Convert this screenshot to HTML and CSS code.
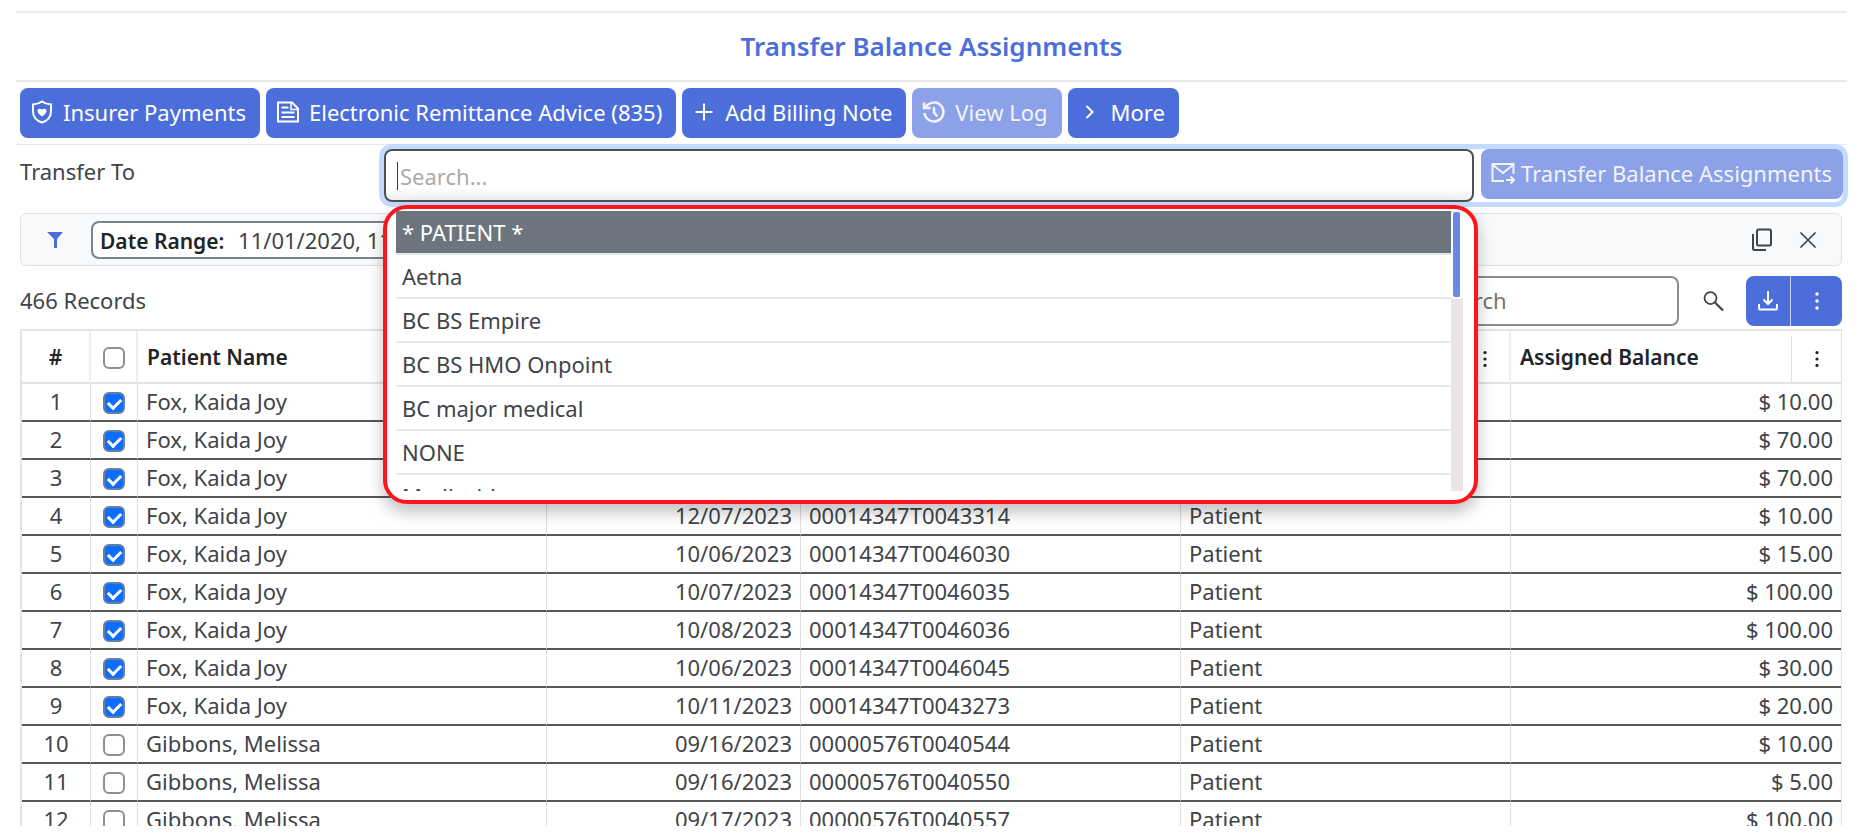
FILE: index.html
```html
<!DOCTYPE html>
<html lang="en">
<head>
    <meta charset="UTF-8">
    <meta name="viewport" content="width=device-width, initial-scale=1.0">
    <title>Transfer Balance Assignments</title>
    <link rel="stylesheet" href="styles.css">
</head>
<body>
    <main class="page">
        <h1>Transfer Balance Assignments</h1>

        <div class="toolbar">
            <button type="button" class="btn">
                <svg class="icon" viewBox="0 0 24 24" fill="none" stroke="currentColor" stroke-width="2"><path d="M12 1.500c2.500 1.800 5.500 2.800 9 3v7c0 5.500-4 9.500-9 11-5-1.500-9-5.500-9-11v-7c3.500-.2 6.500-1.200 9-3z"/><path d="M12 16.500c-3-2.300-4.500-3.900-4.500-5.600C7.500 8.500 10.500 8 12 9.800 13.500 8 16.500 8.500 16.500 10.900c0 1.700-1.500 3.300-4.500 5.600z" fill="currentColor" stroke="none"/></svg>
                Insurer Payments
            </button>
            <button type="button" class="btn">
                <svg class="icon" viewBox="0 0 24 24" fill="none" stroke="currentColor" stroke-width="2"><path d="M2 2.500h14l6 6v13H2z"/><path d="M15 3v6.500h7" stroke-width="1.500"/><path d="M5.500 7.500h7M5.500 12.500h13M5.500 17h13"/></svg>
                Electronic Remittance Advice (835)
            </button>
            <button type="button" class="btn">
                <svg class="icon" viewBox="0 0 24 24" fill="none" stroke="currentColor" stroke-width="2"><path d="M12 3.500v17M3.500 12h17"/></svg>
                Add Billing Note
            </button>
            <button type="button" class="btn" disabled>
                <svg class="icon" viewBox="0 0 24 24" fill="none" stroke="currentColor" stroke-width="2.500"><path d="M2.500 13a9.500 9.500 0 1 0 3-8L3 7.500"/><path d="M2 2.500V8h6.500M12 7v5.500l3.500 4"/></svg>
                View Log
            </button>
            <button type="button" class="btn">
                <svg class="icon" viewBox="0 0 24 24" fill="none" stroke="currentColor" stroke-width="2"><path d="M8.500 6l6 6-6 6"/></svg>
                More
            </button>
        </div>

        <div class="transfer">
            <label for="transfer-to">Transfer To</label>
            <div class="transfer-group">
                <div class="combo">
                    <input type="text" id="transfer-to" placeholder="Search..." role="combobox" aria-expanded="true" aria-controls="insurers" autocomplete="off">
                    <div class="menu">
                        <ul id="insurers" role="listbox" aria-label="Transfer To">
                            <li role="option" class="active" aria-selected="true">* PATIENT *</li>
                            <li role="option">Aetna</li>
                            <li role="option">BC BS Empire</li>
                            <li role="option">BC BS HMO Onpoint</li>
                            <li role="option">BC major medical</li>
                            <li role="option">NONE</li>
                            <li role="option">Medicaid</li>
                        </ul>
                        <div class="scrollbar"><div class="thumb"></div></div>
                    </div>
                </div>
                <button type="button" class="btn" disabled>
                    <svg class="icon" viewBox="0 0 24 24" fill="none" stroke="currentColor" stroke-width="2"><path d="M13 20H1.500V3h21v10"/><path d="M2 4l10 8 10-8"/><path d="M15 19h8M19.500 15.500L23 19l-3.500 3.500"/></svg>
                    Transfer Balance Assignments
                </button>
            </div>
        </div>

        <div class="filters">
            <svg class="funnel" viewBox="0 0 16 16" fill="currentColor"><path d="M0 0h16l-6 7v9H7V7z"/></svg>
            <div class="chip"><b>Date Range:</b> 11/01/2020, 11/30/2024</div>
            <button type="button" class="icon-btn copy" aria-label="Copy filters">
                <svg class="icon" viewBox="0 0 24 24" fill="none" stroke="currentColor" stroke-width="2"><rect x="7" y="1.500" width="14" height="16" rx="1.500"/><path d="M3 6v14.500c0 1 .5 1.500 1.500 1.500H16"/></svg>
            </button>
            <button type="button" class="icon-btn" aria-label="Clear filters">
                <svg class="icon" viewBox="0 0 24 24" fill="none" stroke="currentColor" stroke-width="1.750"><path d="M4.500 4.500l15 15M19.500 4.500l-15 15"/></svg>
            </button>
        </div>

        <div class="records">
            <span class="count">466 Records</span>
            <input type="search" placeholder="Search" aria-label="Search records">
            <button type="button" class="icon-btn" aria-label="Search">
                <svg class="icon" viewBox="0 0 24 24" fill="none" stroke="currentColor" stroke-width="1.750"><circle cx="8.500" cy="9" r="6"/><path d="M13 13.500l8 8" stroke-width="2.250"/></svg>
            </button>
            <div class="split">
                <button type="button" aria-label="Download">
                    <svg class="icon" viewBox="0 0 24 24" fill="none" stroke="currentColor" stroke-width="2"><path d="M12 2v13M7.500 10.500L12 15l4.500-4.500M3 15v4.500c0 .8.500 1 1 1h16c.5 0 1-.2 1-1V15"/></svg>
                </button>
                <button type="button" aria-label="More options">
                    <svg class="icon" viewBox="0 0 24 24" fill="currentColor"><circle cx="12" cy="5" r="1.750"/><circle cx="12" cy="12" r="1.750"/><circle cx="12" cy="19" r="1.750"/></svg>
                </button>
            </div>
        </div>

        <div class="table-wrap">
            <table>
                <colgroup>
                    <col class="c-num"><col class="c-check"><col class="c-name"><col class="c-date"><col class="c-claim"><col class="c-assigned"><col class="c-balance">
                </colgroup>
                <thead>
                    <tr>
                        <th class="num">#</th>
                        <th class="check"><input type="checkbox" aria-label="Select all"></th>
                        <th>Patient Name</th>
                        <th></th>
                        <th></th>
                        <th><div class="head"><button type="button" class="col-menu" aria-label="Column menu"><svg class="icon" viewBox="0 0 24 24" fill="currentColor"><circle cx="12" cy="5" r="1.750"/><circle cx="12" cy="12" r="1.750"/><circle cx="12" cy="19" r="1.750"/></svg></button></div></th>
                        <th><div class="head"><span>Assigned Balance</span><button type="button" class="col-menu" aria-label="Assigned Balance menu"><svg class="icon" viewBox="0 0 24 24" fill="currentColor"><circle cx="12" cy="5" r="1.750"/><circle cx="12" cy="12" r="1.750"/><circle cx="12" cy="19" r="1.750"/></svg></button></div></th>
                    </tr>
                </thead>
                <tbody id="rows"></tbody>
            </table>
        </div>
    </main>

    <script src="script.js"></script>
</body>
</html>
```
FILE: styles.css
```css
* {
    box-sizing: border-box;
}

body {
    margin: 0;
    font-family: "Segoe UI", "Noto Sans", sans-serif;
    font-size: 22px;
    line-height: 28px;
    color: #3f444a;
    background: #fff;
}

button, input {
    font: inherit;
    color: inherit;
}

button {
    padding: 0;
    border: none;
    background: none;
    cursor: pointer;
}

.page {
    height: 100vh;
    padding: 11px 14px 11px 16px;
    display: flex;
    flex-direction: column;
}

h1 {
    margin: 0;
    padding: 16px 0 17px;
    border-top: 2px solid #e6ecfa;
    border-bottom: 2px solid #e5e9ee;
    font-size: 26px;
    line-height: 34px;
    font-weight: 600;
    text-align: center;
    color: #4c6edb;
}

.toolbar {
    display: flex;
    gap: 6px;
    padding: 6px 4px;
    border-bottom: 1px solid #e5e9ee;
}

.btn {
    display: flex;
    align-items: center;
    gap: 9px;
    height: 50px;
    padding: 0 14px 2px 10px;
    border-radius: 8px;
    background: #4c6edb;
    color: #fff;
    white-space: nowrap;
}

.btn:disabled {
    background: #8ca1e7;
    color: #f1f4fd;
    cursor: default;
}

.icon {
    width: 24px;
    height: 24px;
    flex: none;
}

/* transfer row */

.transfer {
    display: grid;
    grid-template-columns: 364px 1fr;
    padding: 4px 4px 0;
}

.transfer label {
    padding-top: 8px;
}

.transfer-group {
    display: flex;
    gap: 7px;
    height: 53px;
    border-radius: 8px;
    box-shadow: 0 0 0 5px #c2dbfe;
}

.transfer-group .btn {
    gap: 6px;
    padding: 0 11px 2px 10px;
}

.combo {
    position: relative;
    flex: 1;
}

.combo input {
    width: 100%;
    height: 53px;
    padding: 0 14px;
    border: 2px solid #4a5056;
    border-radius: 8px;
    outline: none;
    background: linear-gradient(#fff 75%, #eee);
}

.combo input::placeholder {
    color: #aaa;
}

/* caret */
.combo::before {
    content: "";
    position: absolute;
    top: 13px;
    left: 13px;
    width: 1px;
    height: 28px;
    background: #33383d;
}

.menu {
    position: absolute;
    z-index: 10;
    top: 56px;
    left: -1px;
    right: -4px;
    display: flex;
    height: 299px;
    padding: 2px 11px 9px 9px;
    border: 4px solid #ff141c;
    border-radius: 24px;
    background: #fff;
    box-shadow: 0 8px 16px rgba(0, 0, 0, 0.25);
}

.menu ul {
    flex: 1;
    margin: 0;
    padding: 0;
    overflow: hidden;
    list-style: none;
}

.menu li {
    height: 44px;
    padding: 7px 6px;
    border-bottom: 2px solid #e5e9ee;
}

.menu li.active {
    background: #6c757d;
    color: #fff;
}

.scrollbar {
    width: 12px;
    background: #ebe4e5;
}

.thumb {
    height: 88px;
    border: 2px solid #fff;
    border-width: 1px 3px 2px 2px;
    border-radius: 4px;
    background: #6b88e9;
}

/* active filters */

.filters {
    display: flex;
    align-items: center;
    height: 53px;
    margin: 11px 5px 0 4px;
    padding: 0 21px 0 26px;
    border: 1px solid #dee2e6;
    border-radius: 6px;
    background: #f8f9fa;
}

.funnel {
    width: 16px;
    height: 16px;
    color: #4c6edb;
}

.chip {
    height: 38px;
    margin-left: 28px;
    padding: 3px 7px;
    border: 2px solid #7b838a;
    border-radius: 8px;
    background: #fff;
    white-space: pre;
}

.chip b {
    margin-right: 8px;
    font-size: 21px;
    font-weight: 600;
    color: #212529;
}

.icon-btn {
    display: flex;
}

.copy {
    margin-left: auto;
    margin-right: 22px;
}

/* record count and search */

.records {
    display: flex;
    align-items: center;
    margin: 10px 5px 3px 4px;
}

.count {
    margin-right: auto;
    padding-bottom: 2px;
}

.records input {
    width: 248px;
    height: 50px;
    margin-right: 23px;
    padding: 0 8px 2px 4px;
    border: 2px solid #8c8c8c;
    border-radius: 8px;
    outline: none;
}

.records input::placeholder {
    color: #757575;
}

.split {
    display: flex;
    height: 50px;
    margin-left: 20px;
    border-radius: 8px;
    background: #4c6edb;
    color: #fff;
}

.split button {
    display: grid;
    place-items: center;
    width: 44px;
}

.split button + button {
    width: 52px;
    border-left: 1px solid #c9d3f4;
}

/* table */

.table-wrap {
    flex: 1;
    min-height: 0;
    margin: 0 5px 0 4px;
    overflow: hidden;
}

table {
    width: 100%;
    table-layout: fixed;
    border-collapse: separate;
    border-spacing: 0;
    border: 2px solid #e0e3e8;
    border-right-width: 1px;
}

.c-num { width: 69px; }
.c-check { width: 47px; }
.c-name { width: 409px; }
.c-date { width: 254px; }
.c-claim { width: 380px; }
.c-assigned { width: 330px; }

th {
    height: 53px;
    padding: 0 9px;
    border-right: 2px solid #eceef1;
    border-bottom: 2px solid #e0e3e8;
    font-size: 21px;
    font-weight: 600;
    text-align: left;
    color: #212529;
}

th:nth-last-child(-n+2) {
    padding-right: 0;
}

th:last-child {
    border-right: none;
}

td {
    height: 38px;
    padding: 0 8px 2px;
    border-right: 1px solid #dcdee0;
    border-bottom: 2px solid #54585c;
    white-space: nowrap;
}

td:last-child {
    border-right: none;
}

.head {
    display: flex;
    align-items: center;
}

.col-menu {
    display: grid;
    place-items: center;
    height: 46px;
    width: 50px;
    margin-top: 5px;
    margin-left: auto;
    border-left: 1px solid #dcdfe5;
}

.col-menu .icon {
    width: 22px;
    height: 22px;
}

.num {
    text-align: center;
}

.date, .money {
    text-align: right;
}

.check {
    padding: 0;
    text-align: center;
}

.check input {
    appearance: none;
    display: block;
    width: 22px;
    height: 22px;
    margin: 2px auto 0;
    border: 2px solid #8f8f8f;
    border-radius: 6px;
    background: #fff;
}

.check input:checked {
    display: grid;
    place-items: center;
    border-color: #6a7f9f;
    background: #0d6efd;
}

.check input:checked::after {
    content: "";
    width: 10px;
    height: 6px;
    border-left: 3px solid #fff;
    border-bottom: 3px solid #fff;
    transform: translateY(-1px) rotate(-45deg);
}
```
FILE: script.js
```js
const rows = [
    ['Fox, Kaida Joy', '12/04/2023', '00014347T0043311', '10.00', true],
    ['Fox, Kaida Joy', '12/05/2023', '00014347T0043312', '70.00', true],
    ['Fox, Kaida Joy', '12/06/2023', '00014347T0043313', '70.00', true],
    ['Fox, Kaida Joy', '12/07/2023', '00014347T0043314', '10.00', true],
    ['Fox, Kaida Joy', '10/06/2023', '00014347T0046030', '15.00', true],
    ['Fox, Kaida Joy', '10/07/2023', '00014347T0046035', '100.00', true],
    ['Fox, Kaida Joy', '10/08/2023', '00014347T0046036', '100.00', true],
    ['Fox, Kaida Joy', '10/06/2023', '00014347T0046045', '30.00', true],
    ['Fox, Kaida Joy', '10/11/2023', '00014347T0043273', '20.00', true],
    ['Gibbons, Melissa', '09/16/2023', '00000576T0040544', '10.00', false],
    ['Gibbons, Melissa', '09/16/2023', '00000576T0040550', '5.00', false],
    ['Gibbons, Melissa', '09/17/2023', '00000576T0040557', '100.00', false]
];

document.getElementById('rows').innerHTML = rows.map(([name, date, claim, balance, checked], i) => `
    <tr>
        <td class="num">${i + 1}</td>
        <td class="check"><input type="checkbox" aria-label="Select row ${i + 1}" ${checked ? 'checked' : ''}></td>
        <td>${name}</td>
        <td class="date">${date}</td>
        <td>${claim}</td>
        <td>Patient</td>
        <td class="money">$ ${balance}</td>
    </tr>
`).join('');
```
